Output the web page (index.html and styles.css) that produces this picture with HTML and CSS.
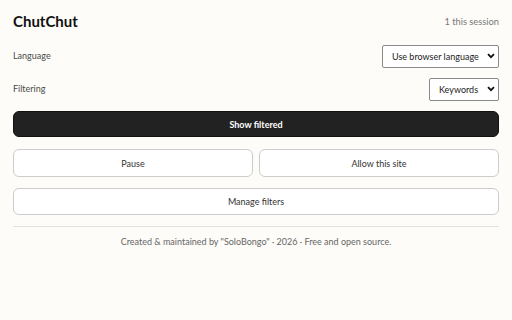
FILE: index.html
```html
<!DOCTYPE html>
<html>
<head>
  <title>ChutChut</title>
  <link rel="stylesheet" href="styles.css">
</head>
<body>
  <div class="popup">
    <div class="header">
      <h1>ChutChut</h1>
      <span class="count">1 this session</span>
    </div>

    <div class="row lang-row">
      <label for="lang">Language</label>
      <div class="select-wrap">
        <select id="lang">
          <option>Use browser language</option>
        </select>
        <svg class="chevron" width="8" height="6" viewBox="0 0 8 6"><path d="M1 1.2 L4 4.2 L7 1.2" fill="none" stroke="#111" stroke-width="1.8"/></svg>
      </div>
    </div>

    <div class="row mode-row">
      <label for="mode">Filtering</label>
      <div class="select-wrap">
        <select id="mode">
          <option>Keywords</option>
        </select>
        <svg class="chevron" width="8" height="6" viewBox="0 0 8 6"><path d="M1 1.2 L4 4.2 L7 1.2" fill="none" stroke="#111" stroke-width="1.8"/></svg>
      </div>
    </div>

    <button class="btn primary">Show filtered</button>

    <div class="pair">
      <button class="btn">Pause</button>
      <button class="btn">Allow this site</button>
    </div>

    <button class="btn manage">Manage filters</button>

    <div class="footer">
      Created &amp; maintained by "SoloBongo" · 2026 · Free and open source.
    </div>
  </div>
</body>
</html>
```

FILE: styles.css
```css
body {
  margin: 0;
  background-color: #fdfcf8;
  font-family: Lato, "Noto Sans", sans-serif;
  color: #222;
}
.popup {
  padding: 10px 13px;
  display: flex;
  flex-direction: column;
}
.header {
  display: flex;
  justify-content: space-between;
  align-items: center;
  height: 22px;
}
h1 {
  margin: 0;
  font-size: 15px;
  font-weight: bold;
  color: #111;
}
.count {
  font-size: 9.3px;
  color: #777;
}
.row {
  display: flex;
  justify-content: space-between;
  align-items: center;
  height: 23px;
}
.lang-row {
  margin-top: 12px;
}
.mode-row {
  margin-top: 10px;
}
label {
  font-size: 9px;
  color: #4a4a4a;
}
.select-wrap {
  position: relative;
}
select {
  appearance: none;
  -webkit-appearance: none;
  height: 23px;
  padding: 0 19px 0 9px;
  font-family: inherit;
  font-size: 9px;
  color: #222;
  background: #fff;
  border: 1px solid #8a8a8a;
  border-radius: 2px;
}
.chevron {
  position: absolute;
  right: 4px;
  top: 9px;
  pointer-events: none;
}
.btn {
  height: 27px;
  font-family: inherit;
  font-size: 9px;
  color: #333;
  background: #fff;
  border: 1px solid #ccc;
  border-radius: 6px;
  cursor: pointer;
}
.btn.primary {
  margin-top: 11px;
  height: 26px;
  background: #222;
  border-color: #111;
  color: #fff;
  font-weight: bold;
}
.pair {
  margin-top: 12px;
  display: flex;
  gap: 6px;
}
.pair .btn {
  flex: 1;
  height: 28px;
}
.btn.manage {
  margin-top: 11px;
}
.footer {
  margin-top: 11px;
  border-top: 1px solid #e2e2e0;
  padding-top: 8px;
  line-height: 14px;
  text-align: center;
  font-size: 9px;
  color: #666;
}
```
